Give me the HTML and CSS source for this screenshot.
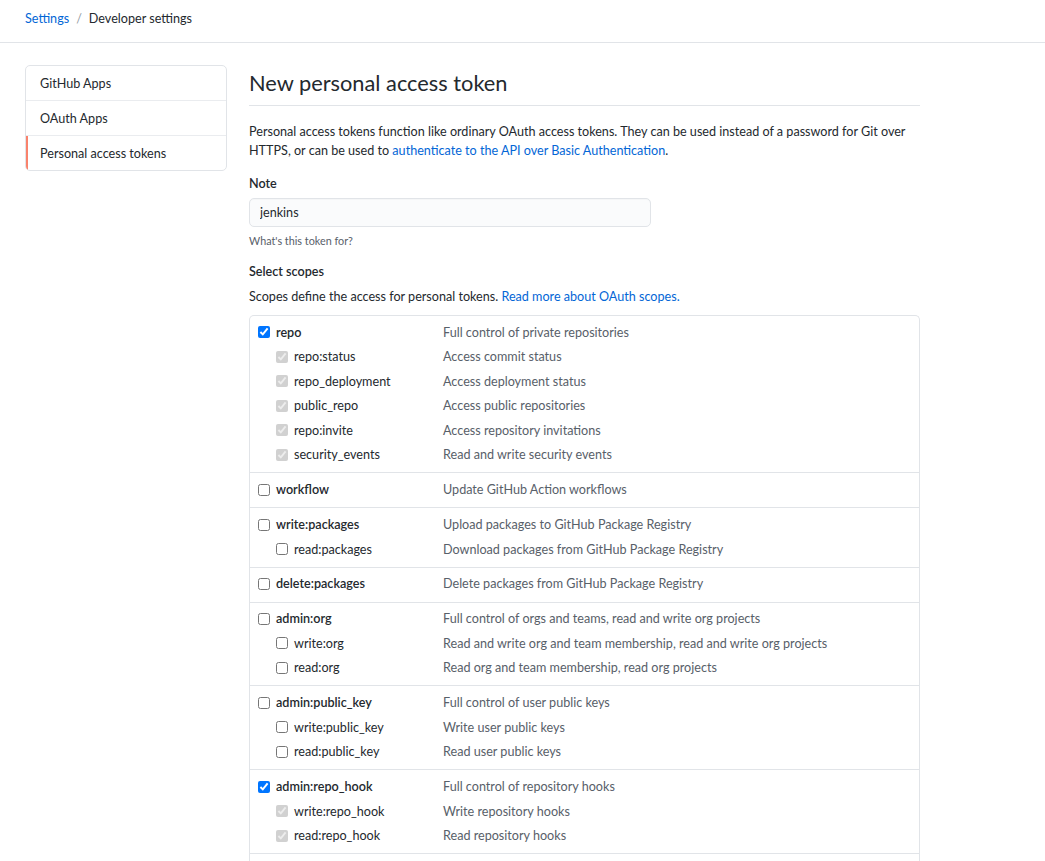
FILE: index.html
```html
<!DOCTYPE html>
<html lang="en">
<head>
<meta charset="utf-8">
<title>New personal access token</title>
<link rel="stylesheet" href="styles.css">
</head>
<body>
<header class="crumbs">
  <a class="crumb-link" href="#">Settings</a>
  <span class="crumb-sep">/</span>
  <span class="crumb-current">Developer settings</span>
</header>
<div class="layout">
  <nav class="side-menu">
    <a class="menu-item" href="#">GitHub Apps</a>
    <a class="menu-item" href="#">OAuth Apps</a>
    <a class="menu-item selected" href="#">Personal access tokens</a>
  </nav>
  <main class="main">
    <div class="subhead"><h2 class="subhead-title">New personal access token</h2></div>
    <p class="lead">Personal access tokens function like ordinary OAuth access tokens. They can be used instead of a password for Git over HTTPS, or can be used to <a href="#">authenticate to the API over Basic Authentication</a>.</p>
    <form class="token-form">
      <label class="field-label" for="note">Note</label>
      <input class="field-input" id="note" type="text" value="jenkins">
      <p class="field-hint">What's this token for?</p>
      <h3 class="field-label section-label">Select scopes</h3>
      <p class="scopes-intro">Scopes define the access for personal tokens. <a href="#">Read more about OAuth scopes.</a></p>
      <div class="scopes">
        <div class="scope-group">
          <div class="scope-row"><label class="scope-name top"><input type="checkbox" checked>repo</label><span class="scope-desc">Full control of private repositories</span></div>
          <div class="scope-row"><label class="scope-name sub"><input type="checkbox" checked disabled>repo:status</label><span class="scope-desc">Access commit status</span></div>
          <div class="scope-row"><label class="scope-name sub"><input type="checkbox" checked disabled>repo_deployment</label><span class="scope-desc">Access deployment status</span></div>
          <div class="scope-row"><label class="scope-name sub"><input type="checkbox" checked disabled>public_repo</label><span class="scope-desc">Access public repositories</span></div>
          <div class="scope-row"><label class="scope-name sub"><input type="checkbox" checked disabled>repo:invite</label><span class="scope-desc">Access repository invitations</span></div>
          <div class="scope-row"><label class="scope-name sub"><input type="checkbox" checked disabled>security_events</label><span class="scope-desc">Read and write security events</span></div>
        </div>
        <div class="scope-group">
          <div class="scope-row"><label class="scope-name top"><input type="checkbox">workflow</label><span class="scope-desc">Update GitHub Action workflows</span></div>
        </div>
        <div class="scope-group">
          <div class="scope-row"><label class="scope-name top"><input type="checkbox">write:packages</label><span class="scope-desc">Upload packages to GitHub Package Registry</span></div>
          <div class="scope-row"><label class="scope-name sub"><input type="checkbox">read:packages</label><span class="scope-desc">Download packages from GitHub Package Registry</span></div>
        </div>
        <div class="scope-group">
          <div class="scope-row"><label class="scope-name top"><input type="checkbox">delete:packages</label><span class="scope-desc">Delete packages from GitHub Package Registry</span></div>
        </div>
        <div class="scope-group">
          <div class="scope-row"><label class="scope-name top"><input type="checkbox">admin:org</label><span class="scope-desc">Full control of orgs and teams, read and write org projects</span></div>
          <div class="scope-row"><label class="scope-name sub"><input type="checkbox">write:org</label><span class="scope-desc">Read and write org and team membership, read and write org projects</span></div>
          <div class="scope-row"><label class="scope-name sub"><input type="checkbox">read:org</label><span class="scope-desc">Read org and team membership, read org projects</span></div>
        </div>
        <div class="scope-group">
          <div class="scope-row"><label class="scope-name top"><input type="checkbox">admin:public_key</label><span class="scope-desc">Full control of user public keys</span></div>
          <div class="scope-row"><label class="scope-name sub"><input type="checkbox">write:public_key</label><span class="scope-desc">Write user public keys</span></div>
          <div class="scope-row"><label class="scope-name sub"><input type="checkbox">read:public_key</label><span class="scope-desc">Read user public keys</span></div>
        </div>
        <div class="scope-group">
          <div class="scope-row"><label class="scope-name top"><input type="checkbox" checked>admin:repo_hook</label><span class="scope-desc">Full control of repository hooks</span></div>
          <div class="scope-row"><label class="scope-name sub"><input type="checkbox" checked disabled>write:repo_hook</label><span class="scope-desc">Write repository hooks</span></div>
          <div class="scope-row"><label class="scope-name sub"><input type="checkbox" checked disabled>read:repo_hook</label><span class="scope-desc">Read repository hooks</span></div>
        </div>
        <div class="scope-group">
          <div class="scope-row"><label class="scope-name top"><input type="checkbox">admin:org_hook</label><span class="scope-desc">Full control of organization hooks</span></div>
        </div>
        <div class="scope-group">
          <div class="scope-row"><label class="scope-name top"><input type="checkbox">gist</label><span class="scope-desc">Create gists</span></div>
        </div>
      </div>
    </form>
  </main>
</div>
</body>
</html>
```
FILE: styles.css
```css
* { box-sizing: border-box; }

html, body {
  margin: 0;
  padding: 0;
  background: #fff;
}

body {
  font-family: Lato, "Liberation Sans", sans-serif;
  font-size: 12.6px;
  line-height: 19px;
  color: #24292e;
}

a { color: #0366d6; text-decoration: none; }

.crumbs {
  height: 43px;
  padding: 9px 25px 0;
  border-bottom: 1px solid #e1e4e8;
  display: flex;
  align-items: flex-start;
  gap: 7px;
  font-size: 12.6px;
}

.crumb-sep { color: #959da5; }
.crumb-current { color: #24292e; }

.layout {
  display: flex;
  align-items: flex-start;
  gap: 22px;
  padding: 22px 25px 0;
}

.side-menu {
  width: 202px;
  flex: none;
  border: 1px solid #e1e4e8;
  border-radius: 5px;
  display: flex;
  flex-direction: column;
  overflow: hidden;
}

.menu-item {
  display: block;
  height: 35px;
  padding: 8px 14px;
  color: #24292e;
  border-bottom: 1px solid #eaecef;
}

.menu-item:last-child { border-bottom: 0; height: 34px; }

.menu-item.selected {
  border-left: 2px solid #f9826c;
  padding-left: 12px;
}

.main {
  width: 671px;
  flex: none;
}

.subhead {
  border-bottom: 1px solid #e1e4e8;
  padding-bottom: 4px;
}

.subhead-title {
  margin: 0;
  font-size: 21.8px;
  line-height: 36px;
  font-weight: 400;
}

.lead {
  margin: 16px 0 0;
}

.token-form {
  display: flex;
  flex-direction: column;
  align-items: flex-start;
}

.field-label {
  margin: 14px 0 0;
  font-size: 12.6px;
  line-height: 19px;
  font-weight: 600;
}

.section-label { margin-top: 13px; }

.field-input {
  margin-top: 5px;
  width: 402px;
  height: 29px;
  padding: 0 10px;
  font: inherit;
  color: #24292e;
  background: #fafbfc;
  border: 1px solid #e1e4e8;
  border-radius: 5px;
  box-shadow: inset 0 1px 0 rgba(225, 228, 232, 0.2);
}

.field-hint {
  margin: 6px 0 0;
  font-size: 10.8px;
  line-height: 16px;
  color: #586069;
}

.scopes-intro {
  margin: 6px 0 0;
}

.scopes {
  margin-top: 9px;
  width: 671px;
  border: 1px solid #e1e4e8;
  border-bottom: 0;
  border-radius: 5px 5px 0 0;
}

.scope-group {
  padding: 4px 8px 5.4px;
  border-bottom: 1px solid #e1e4e8;
}

.scope-row {
  display: grid;
  grid-template-columns: 185px 1fr;
  height: 24.5px;
  align-items: center;
}

.scope-name {
  display: flex;
  align-items: center;
  color: #24292e;
}

.scope-name.top { font-weight: 600; }
.scope-name.sub { padding-left: 18px; }

.scope-name input {
  width: 12px;
  height: 12px;
  margin: 0 6px 0 0;
  flex: none;
}

.scope-desc {
  color: #586069;
}
```
